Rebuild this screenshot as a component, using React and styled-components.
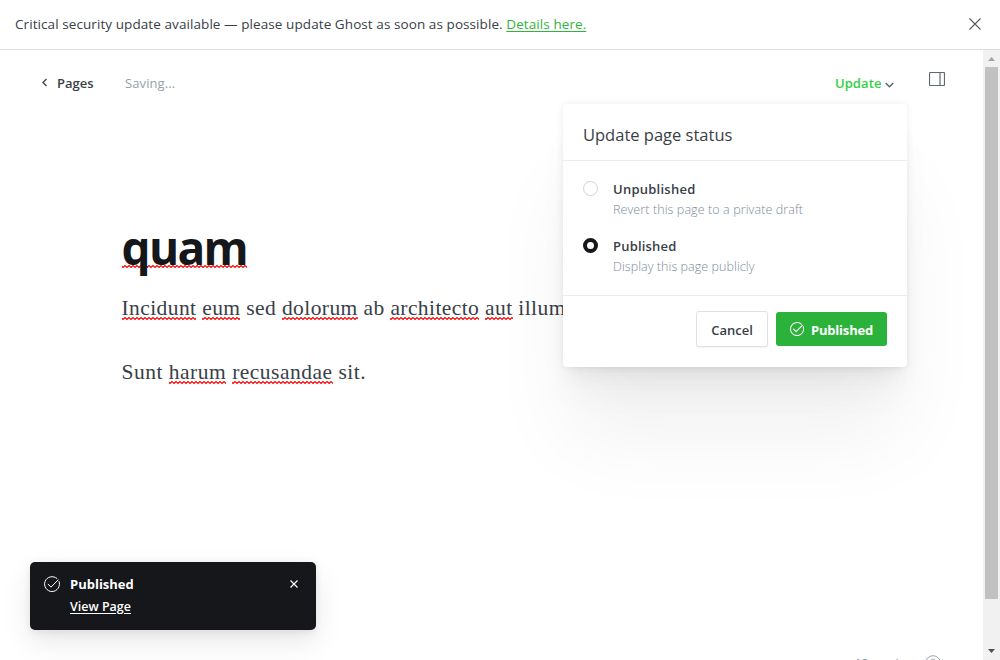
import React from 'react';
import styled, { createGlobalStyle } from 'styled-components';

const Global = createGlobalStyle`
  * { box-sizing: border-box; }
  body { margin: 0; background: #fff; color: #394047; font-family: "Open Sans", "Noto Sans", sans-serif; overflow: hidden; }
  h1, h2, h3, p { margin: 0; }
  button { font-family: inherit; cursor: pointer; }
  svg { display: block; flex: none; }
`;

const Screen = styled.div`
  position: relative;
  display: flex;
  flex-direction: column;
  width: 1000px;
  height: 660px;
  overflow: hidden;
`;
const Alert = styled.div`
  flex: none;
  display: flex;
  align-items: center;
  justify-content: space-between;
  height: 50px;
  padding: 0 19px 2px 15px;
  border-bottom: 1px solid #dddedf;
`;
const T = styled.span`
  display: block;
  white-space: nowrap;
  font-size: ${p => p.$size || 13}px;
  font-weight: ${p => p.$weight || 400};
  letter-spacing: ${p => p.$ls || 0}px;
  line-height: ${p => p.$lh || 20}px;
  color: ${p => p.$color || '#394047'};
`;
const GreenLink = styled.a`
  color: #30b43c;
  text-decoration: underline;
  text-underline-offset: 2px;
`;
const Body = styled.div`
  flex: 1;
  display: flex;
  min-height: 0;
`;
const Editor = styled.main`
  position: relative;
  width: 983px;
  overflow: hidden;
`;
const TopBar = styled.header`
  display: flex;
  align-items: flex-start;
  height: 54px;
  padding: 21px 38px 0 41px;
`;
const Back = styled.a`
  display: flex;
  align-items: center;
  gap: 8px;
  width: 84px;
  height: 24px;
`;
const Update = styled.button`
  display: flex;
  align-items: center;
  gap: 3px;
  height: 24px;
  margin-left: auto;
  padding: 0;
  border: 0;
  background: none;

  svg { margin-top: 3px; }
`;
const SidebarToggle = styled.div`
  width: 16px;
  margin: 1px 0 0 35.5px;
`;
const Content = styled.article`
  padding: 113px 0 0 121.5px;
`;
const Title = styled.h1`
  font-size: 46px;
  line-height: 60px;
  height: 75px;
  font-weight: 700;
  letter-spacing: -1.7px;
  color: #15171a;
`;
const Para = styled.p`
  height: 64px;
  font-family: "Liberation Serif", serif;
  font-size: 21.5px;
  line-height: 32px;
  white-space: nowrap;
  letter-spacing: ${p => p.$ls}px;
`;
const squiggle = "data:image/svg+xml,%3Csvg xmlns='http://www.w3.org/2000/svg' width='4' height='3'%3E%3Cpath d='M-1 .5L1 2.5L3 .5L5 2.5' fill='none' stroke='red' stroke-width='1.15'/%3E%3C/svg%3E";
const Wrong = styled.span`
  background: url("${squiggle}") repeat-x 0 calc(100% - ${p => p.$up || 0}px);
  background-size: 4px 3px;
`;
const Footer = styled.footer`
  position: absolute;
  right: 42px;
  bottom: -11px;
  display: flex;
  align-items: flex-start;
  gap: 21px;
`;
const Scrollbar = styled.div`
  display: flex;
  flex-direction: column;
  align-items: center;
  justify-content: space-between;
  width: 17px;
  background: #f1f1f1;
`;
const Thumb = styled.div`
  width: 13px;
  height: 532px;
  margin-bottom: 44px;
  background: #c1c1c1;
`;
const Menu = styled.section`
  position: absolute;
  left: 563px;
  top: 104px;
  width: 344px;
  height: 263px;
  border-radius: 4px;
  background: #fff;
  box-shadow: 0 0 7px rgba(0,0,0,.08), 0 2.1px 2.2px -5px rgba(0,0,0,.013), 0 5.1px 5.3px -5px rgba(0,0,0,.02), 0 9.5px 10px -5px rgba(0,0,0,.025), 0 17px 17.9px -5px rgba(0,0,0,.03), 0 31.8px 33.4px -5px rgba(0,0,0,.035), 0 76px 80px -5px rgba(0,0,0,.055);
`;
const MenuHead = styled.header`
  height: 57px;
  padding: 19px 20px 0;
  border-bottom: 1px solid #e9ebed;
`;
const Options = styled.div`
  height: 135px;
  padding: 18px 20px 0;
  border-bottom: 1px solid #e9ebed;
`;
const Option = styled.div`
  display: flex;
  gap: 15px;
  height: 57px;
`;
const Radio = styled.span`
  width: 15px;
  height: 15px;
  margin-top: 2px;
  border-radius: 50%;
  border: ${p => p.$on ? '4px solid #15171a' : '1px solid #ced4d9'};
  background: #fff;
`;
const Actions = styled.div`
  display: flex;
  align-items: flex-start;
  justify-content: flex-end;
  gap: 8px;
  padding: 15px 20px 0;
`;
const Button = styled.button`
  display: flex;
  align-items: center;
  justify-content: center;
  gap: 7px;
  width: ${p => p.$primary ? 111 : 72}px;
  height: ${p => p.$primary ? 34 : 36}px;
  margin-top: ${p => p.$primary ? 1 : 0}px;
  padding: 2px 0 0;
  border: ${p => p.$primary ? '0' : '1px solid #dde1e5'};
  border-radius: 3px;
  background: ${p => p.$primary ? '#2ab23a' : '#fff'};
  box-shadow: ${p => p.$primary ? 'none' : '0 1px 1px rgba(0,0,0,.05)'};

  svg { margin-top: -2px; }
`;
const Toast = styled.aside`
  position: absolute;
  left: 30px;
  top: 562px;
  display: flex;
  gap: 10px;
  width: 286px;
  height: 68px;
  padding: 12px 18px 0 14px;
  border-radius: 5px;
  background: #15171a;
  box-shadow: 0 0 7px rgba(0,0,0,.05), 0 5px 9px rgba(0,0,0,.04), 0 12px 30px rgba(0,0,0,.09);
`;
const ToastText = styled.div`
  flex: 1;
`;
const ViewPage = styled(T)`
  text-decoration: underline;
  text-underline-offset: 2px;
`;
const ToastIcon = styled.div`
  padding-top: ${p => p.$top}px;
`;

const Check = ({ size, color = '#fff', stroke = 1.5 }) => (
  <svg width={size} height={size} viewBox="0 0 24 24" fill="none" stroke={color} strokeWidth={stroke} strokeLinecap="round" strokeLinejoin="round">
    <path d="M22.6 8.2A11.2 11.2 0 1 1 19.4 3.6" />
    <path d="M6.2 12.3l4.3 4.4L21.2 5.8" />
  </svg>
);
const Cross = ({ size, color, stroke }) => (
  <svg width={size} height={size} viewBox={`0 0 ${size} ${size}`} stroke={color} strokeWidth={stroke}>
    <path d={`M.5.5l${size - 1} ${size - 1}M${size - .5}.5L.5 ${size - .5}`} />
  </svg>
);

export default function App() {
  return (
    <Screen>
      <Global />
      <Alert>
        <T $size={13.5} $ls={0.08}>Critical security update available — please update Ghost as soon as possible. <GreenLink>Details here.</GreenLink></T>
        <Cross size={12} color="#54595f" stroke={1.1} />
      </Alert>
      <Body>
        <Editor>
          <TopBar>
            <Back>
              <svg width="8" height="10" viewBox="0 0 8 10" fill="none" stroke="#394047" strokeWidth="1.3"><path d="M5.5 1L2 4.5 5.5 8" /></svg>
              <T $weight={600}>Pages</T>
            </Back>
            <T $lh={24} $ls={0.1} $color="#95a1ad">Saving...</T>
            <Update>
              <T $weight={600} $ls={0.1} $color="#30cf43">Update</T>
              <svg width="9" height="6" viewBox="0 0 9 6" fill="none" stroke="#5d656d" strokeWidth="1.5"><path d="M.7 1l3.8 3.7L8.3 1" /></svg>
            </Update>
            <SidebarToggle>
              <svg width="16" height="14" viewBox="0 0 16 14" fill="none" stroke="#606971" strokeWidth="1.2"><rect x=".5" y=".5" width="15" height="13" rx="1" /><path d="M11 .5v13" /></svg>
            </SidebarToggle>
          </TopBar>
          <Content>
            <Title><Wrong $up={10}>quam</Wrong></Title>
            <Para $ls={0.41}><Wrong>Incidunt</Wrong> <Wrong>eum</Wrong> sed <Wrong>dolorum</Wrong> ab <Wrong>architecto</Wrong> <Wrong>aut</Wrong> illum</Para>
            <Para $ls={0.5}>Sunt <Wrong>harum</Wrong> <Wrong>recusandae</Wrong> sit.</Para>
          </Content>
          <Footer>
            <T $size={11.5} $lh={15} $color="#7c8b9a">12 words</T>
            <svg width="16" height="16" viewBox="0 0 16 16" fill="none" stroke="#98a3ad"><circle cx="8" cy="8" r="7.3" /><path d="M5.8 6.4a2.2 2.2 0 1 1 3 2c-.6.3-.8.7-.8 1.4M8 11v1" /></svg>
          </Footer>
        </Editor>
        <Scrollbar>
          <svg width="17" height="17" viewBox="0 0 17 17"><path d="M5 11h7L8.5 7z" fill="#a3a3a3" /></svg>
          <Thumb />
          <svg width="17" height="17" viewBox="0 0 17 17"><path d="M5 6h7L8.5 10z" fill="#505050" /></svg>
        </Scrollbar>
      </Body>
      <Menu>
        <MenuHead><T $size={16.5} $lh={24}>Update page status</T></MenuHead>
        <Options>
          <Option>
            <Radio />
            <div><T $weight={600} $ls={0.25}>Unpublished</T><T $size={12.5} $lh={21} $ls={0.1} $weight={300} $color="#7c8b9a">Revert this page to a private draft</T></div>
          </Option>
          <Option>
            <Radio $on />
            <div><T $weight={600} $ls={0.2}>Published</T><T $size={12.5} $lh={21} $ls={0.06} $weight={300} $color="#7c8b9a">Display this page publicly</T></div>
          </Option>
        </Options>
        <Actions>
          <Button><T $weight={600}>Cancel</T></Button>
          <Button $primary><Check size={14} stroke={1.8} /><T $weight={700} $ls={-0.2} $color="#fff">Published</T></Button>
        </Actions>
      </Menu>
      <Toast>
        <ToastIcon $top={2}><Check size={16} /></ToastIcon>
        <ToastText>
          <T $weight={700} $color="#fff">Published</T>
          <ViewPage $size={12.5} $lh={26} $weight={600} $color="#fff">View Page</ViewPage>
        </ToastText>
        <ToastIcon $top={6}><Cross size={8} color="#fff" stroke={1.2} /></ToastIcon>
      </Toast>
    </Screen>
  );
}
